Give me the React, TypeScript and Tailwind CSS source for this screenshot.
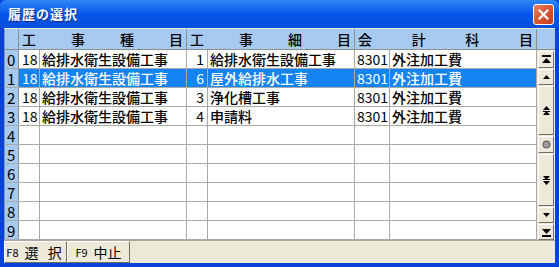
import React from "react";

type Row = {
  code1: string;
  name1: string;
  code2: string;
  name2: string;
  code3: string;
  name3: string;
};

const rows: (Row | null)[] = [
  { code1: "18", name1: "給排水衛生設備工事", code2: "1", name2: "給排水衛生設備工事", code3: "8301", name3: "外注加工費" },
  { code1: "18", name1: "給排水衛生設備工事", code2: "6", name2: "屋外給排水工事", code3: "8301", name3: "外注加工費" },
  { code1: "18", name1: "給排水衛生設備工事", code2: "3", name2: "浄化槽工事", code3: "8301", name3: "外注加工費" },
  { code1: "18", name1: "給排水衛生設備工事", code2: "4", name2: "申請料", code3: "8301", name3: "外注加工費" },
  null,
  null,
  null,
  null,
  null,
  null,
];

const selected = 1;

const font = { fontFamily: "'Noto Sans CJK JP', 'Noto Sans', sans-serif" };

const HeaderCell = ({ chars, w }: { chars: string[]; w: string }) => (
  <div className={`${w} h-full flex items-center justify-between px-[3px] border-r border-[#8f8f8f] text-[14px] leading-none font-medium`}>
    {chars.map((c, i) => (
      <span key={i}>{c}</span>
    ))}
  </div>
);

const ScrollBtn = ({ h, children }: { h: string; children: React.ReactNode }) => (
  <div
    className={`${h} w-[16px] flex items-center justify-center bg-[#ECE9D8] border border-t-white border-l-white border-r-[#716F64] border-b-[#716F64]`}
  >
    {children}
  </div>
);

export default function App() {
  return (
    <div className="w-[559px] h-[267px] flex flex-col bg-[#0842D8] overflow-hidden" style={font}>
      {/* title bar */}
      <div className="h-[28px] flex items-center justify-between pl-[8px] pr-[5px] rounded-t-[6px] bg-gradient-to-b from-[#2F86F6] via-[#0657EA] to-[#0550DC]">
        <span className="text-white font-bold text-[13px] tracking-[1px] [text-shadow:1px_1px_0_#0A2A8A]">
          履歴の選択
        </span>
        <div className="w-[21px] h-[21px] rounded-[3px] border border-white bg-gradient-to-br from-[#E9836A] via-[#D9532E] to-[#C2401F] flex items-center justify-center">
          <svg width="11" height="11" viewBox="0 0 11 11">
            <path d="M1.5 1.5 L9.5 9.5 M9.5 1.5 L1.5 9.5" stroke="white" strokeWidth="2.2" strokeLinecap="square" />
          </svg>
        </div>
      </div>

      {/* body */}
      <div className="flex-1 mx-[4px] bg-[#ECE9D8] flex flex-col pt-[1px]">
        <div className="flex">
          <div className="flex flex-col bg-white">
            {/* header */}
            <div className="h-[21px] flex bg-[#A6CAF0] border-b border-[#8f8f8f] text-black">
              <div className="w-[15px] h-full border-r border-[#8f8f8f] border-l border-l-[#7a96c0]" />
              <HeaderCell w="w-[168px]" chars={["工", "事", "種", "目"]} />
              <HeaderCell w="w-[168px]" chars={["工", "事", "細", "目"]} />
              <HeaderCell w="w-[182px]" chars={["会", "計", "科", "目"]} />
            </div>
            {rows.map((r, i) => {
              const sel = i === selected;
              const cell = `h-full border-r border-[#A9A9A9] flex items-center text-[14px] leading-none whitespace-nowrap overflow-hidden`;
              return (
                <div key={i} className={`h-[19px] flex border-b border-[#A9A9A9] ${sel ? "bg-[#1683F3] text-white" : "text-black"}`}>
                  <div className="w-[15px] h-full bg-[#A6CAF0] border-r border-[#8f8f8f] border-l border-l-[#7a96c0] flex items-center pl-[2px] text-[15px] leading-none text-black">
                    {i}
                  </div>
                  <div className={`w-[21px] pl-[3px] ${cell}`}>{r?.code1}</div>
                  <div className={`w-[147px] pl-[2px] font-medium ${cell}`}>{r?.name1}</div>
                  <div className={`w-[21px] pr-[3px] justify-end ${cell}`}>{r?.code2}</div>
                  <div className={`w-[147px] pl-[2px] font-medium ${cell}`}>{r?.name2}</div>
                  <div className={`w-[35px] pl-[2px] ${cell}`}>{r?.code3}</div>
                  <div className={`w-[147px] pl-[2px] font-medium ${cell}`}>{r?.name3}</div>
                </div>
              );
            })}
          </div>

          {/* scrollbar column */}
          <div className="w-[18px] flex flex-col">
            <div className="h-[21px] bg-[#A6CAF0] border-b border-[#8f8f8f]" />
            <div className="flex-1 flex flex-col items-start pl-[1px] pt-[1px] gap-[1px] bg-[#ECE9D8]">
              <ScrollBtn h="h-[17px]">
                <svg width="9" height="9" viewBox="0 0 9 9">
                  <rect x="0" y="0" width="9" height="2" fill="black" />
                  <path d="M4.5 3 L9 8 L0 8 Z" fill="black" />
                </svg>
              </ScrollBtn>
              <ScrollBtn h="h-[16px]">
                <svg width="7" height="4" viewBox="0 0 7 4">
                  <path d="M3.5 0 L7 4 L0 4 Z" fill="black" />
                </svg>
              </ScrollBtn>
              <ScrollBtn h="h-[49px]">
                <svg width="7" height="9" viewBox="0 0 7 9">
                  <path d="M3.5 0 L7 4 L0 4 Z" fill="black" />
                  <rect x="0" y="5" width="7" height="1" fill="black" />
                  <path d="M3.5 5 L7 9 L0 9 Z" fill="black" />
                </svg>
              </ScrollBtn>
              <ScrollBtn h="h-[17px]">
                <svg width="9" height="9" viewBox="0 0 9 9">
                  <circle cx="4.5" cy="4.5" r="3.6" fill="#9c9c9c" stroke="#555" strokeWidth="1" />
                </svg>
              </ScrollBtn>
              <ScrollBtn h="h-[52px]">
                <svg width="7" height="9" viewBox="0 0 7 9">
                  <path d="M0 0 L7 0 L3.5 4 Z" fill="black" />
                  <rect x="0" y="3" width="7" height="1" fill="black" />
                  <path d="M0 5 L7 5 L3.5 9 Z" fill="black" />
                </svg>
              </ScrollBtn>
              <ScrollBtn h="h-[16px]">
                <svg width="7" height="4" viewBox="0 0 7 4">
                  <path d="M0 0 L7 0 L3.5 4 Z" fill="black" />
                </svg>
              </ScrollBtn>
              <ScrollBtn h="h-[16px]">
                <svg width="9" height="9" viewBox="0 0 9 9">
                  <path d="M0 1 L9 1 L4.5 6 Z" fill="black" />
                  <rect x="0" y="7" width="9" height="2" fill="black" />
                </svg>
              </ScrollBtn>
            </div>
          </div>
        </div>

        {/* function key bar */}
        <div className="flex-1 flex border-t border-t-[#ACA899]">
          <div className="w-[63px] h-[22px] flex items-center justify-center gap-[6px] bg-[#ECE9D8] border border-t-white border-l-white border-r-[#716F64] border-b-[#716F64]">
            <span className="text-[11px] leading-none">F8</span>
            <span className="text-[14px] leading-none tracking-[3px]">選 択</span>
          </div>
          <div className="w-[63px] h-[22px] flex items-center justify-center gap-[6px] bg-[#ECE9D8] border border-t-white border-l-white border-r-[#716F64] border-b-[#716F64]">
            <span className="text-[11px] leading-none">F9</span>
            <span className="text-[14px] leading-none">中止</span>
          </div>
        </div>
      </div>
      <div className="h-[4px]" />
    </div>
  );
}
